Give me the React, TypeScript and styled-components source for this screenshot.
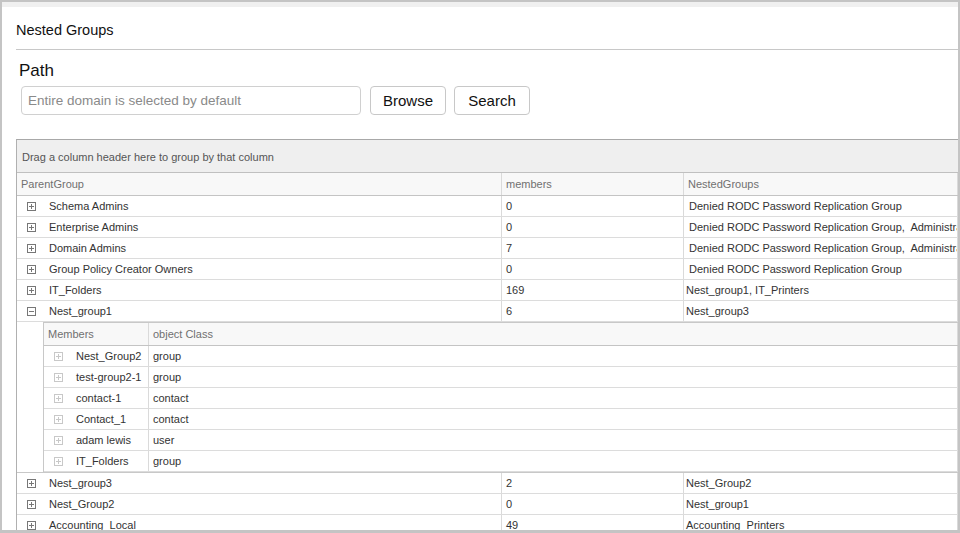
import React from 'react';
import styled, { createGlobalStyle } from 'styled-components';

const GlobalStyle = createGlobalStyle`
  html, body {
    margin: 0;
    padding: 0;
    background: #fff;
    overflow: hidden;
  }
  body {
    font-family: "Liberation Sans", Arial, sans-serif;
    color: #333;
  }
`;

const Frame = styled.div`
  width: 960px;
  height: 533px;
  box-sizing: border-box;
  border: 2px solid #c4c4c4;
  border-bottom-width: 3px;
  display: flex;
  flex-direction: column;
  overflow: hidden;
`;

const TopStrip = styled.div`
  height: 5px;
  background: #f0f0f0;
  flex-shrink: 0;
`;

const Content = styled.div`
  padding-left: 14px;
  flex: 1;
  display: flex;
  flex-direction: column;
  min-height: 0;
`;

const TitleBar = styled.div`
  height: 43px;
  box-sizing: border-box;
  padding-top: 15px;
  border-bottom: 1px solid #c8c8c8;
  font-size: 14.5px;
  color: #111;
  flex-shrink: 0;
`;

const PathSection = styled.div`
  padding-left: 3px;
  padding-top: 11px;
  height: 89px;
  box-sizing: border-box;
  flex-shrink: 0;
`;

const PathLabel = styled.div`
  font-size: 17px;
  color: #111;
  line-height: 20px;
`;

const PathRow = styled.div`
  display: flex;
  align-items: center;
  gap: 8px;
  margin-top: 5px;
  padding-left: 2px;
`;

const PathInput = styled.input`
  width: 340px;
  height: 29px;
  box-sizing: border-box;
  border: 1px solid #d0d0d0;
  border-radius: 4px;
  padding: 0 6px;
  font-family: "Liberation Sans", Arial, sans-serif;
  font-size: 13.5px;
  color: #333;
  margin-right: 1px;
  &::placeholder {
    color: #8a8a8a;
  }
`;

const Button = styled.button`
  width: 76px;
  height: 29px;
  box-sizing: border-box;
  border: 1px solid #c8c8c8;
  border-radius: 4px;
  background: #fff;
  font-family: "Liberation Sans", Arial, sans-serif;
  font-size: 15px;
  color: #111;
  padding: 0;
`;

const Grid = styled.div`
  border-top: 1px solid #a8a8a8;
  border-left: 1px solid #b0b0b0;
  flex: 1;
  min-height: 0;
  overflow: hidden;
  font-size: 11px;
`;

const GroupPanel = styled.div`
  background: #efefef;
  border-bottom: 1px solid #c0c0c0;
  display: flex;
  align-items: center;
  padding-left: 5px;
  padding-top: 2px;
  box-sizing: border-box;
  height: 33px;
  color: #555;
`;

const Row = styled.div<{ $cols: string; $header?: boolean }>`
  display: grid;
  grid-template-columns: ${p => p.$cols};
  height: ${p => (p.$header ? 23 : 21)}px;
  box-sizing: border-box;
  border-bottom: 1px solid ${p => (p.$header ? '#c4c4c4' : '#dcdcdc')};
  background: ${p => (p.$header ? '#f8f8f8' : '#fff')};
  color: ${p => (p.$header ? '#707070' : '#333')};
`;

const Cell = styled.div<{ $pad?: number }>`
  display: flex;
  align-items: center;
  padding-left: ${p => p.$pad ?? 4}px;
  border-right: 1px solid #dadada;
  white-space: pre;
  overflow: hidden;
  min-width: 0;
`;

const ExpandBox = styled.span<{ $faint?: boolean }>`
  display: inline-flex;
  width: 9px;
  height: 9px;
  margin-right: 13px;
  flex-shrink: 0;
  color: ${p => (p.$faint ? '#c8c8c8' : '#777')};
`;

const Detail = styled.div`
  padding-left: 26px;
  border-bottom: 1px solid #c8c8c8;
`;

const SubGrid = styled.div`
  border-top: 1px solid #c8c8c8;
  border-left: 1px solid #c8c8c8;
`;

const Expander = ({ open, faint }: { open?: boolean; faint?: boolean }) => (
  <ExpandBox $faint={faint}>
    <svg width="9" height="9" viewBox="0 0 9 9">
      <rect x="0.5" y="0.5" width="8" height="8" fill="none" stroke="currentColor" />
      <line x1="2" y1="4.5" x2="7" y2="4.5" stroke="currentColor" />
      {!open && <line x1="4.5" y1="2" x2="4.5" y2="7" stroke="currentColor" />}
    </svg>
  </ExpandBox>
);

const mainCols = '485px 182px 1fr';
const subCols = '105px 1fr';

const topGroups = [
  ['Schema Admins', '0', ' Denied RODC Password Replication Group'],
  ['Enterprise Admins', '0', ' Denied RODC Password Replication Group,  Administrators'],
  ['Domain Admins', '7', ' Denied RODC Password Replication Group,  Administrators'],
  ['Group Policy Creator Owners', '0', ' Denied RODC Password Replication Group'],
  ['IT_Folders', '169', 'Nest_group1, IT_Printers'],
];

const members = [
  ['Nest_Group2', 'group'],
  ['test-group2-1', 'group'],
  ['contact-1', 'contact'],
  ['Contact_1', 'contact'],
  ['adam lewis', 'user'],
  ['IT_Folders', 'group'],
];

const bottomGroups = [
  ['Nest_group3', '2', 'Nest_Group2'],
  ['Nest_Group2', '0', 'Nest_group1'],
  ['Accounting_Local', '49', 'Accounting_Printers'],
];

const GroupRow = ({ row, open }: { row: string[]; open?: boolean }) => (
  <Row $cols={mainCols}>
    <Cell $pad={10}>
      <Expander open={open} />
      {row[0]}
    </Cell>
    <Cell>{row[1]}</Cell>
    <Cell $pad={2}>{row[2]}</Cell>
  </Row>
);

export default function App() {
  return (
    <Frame>
      <GlobalStyle />
      <TopStrip />
      <Content>
        <TitleBar>Nested Groups</TitleBar>
        <PathSection>
          <PathLabel>Path</PathLabel>
          <PathRow>
            <PathInput placeholder="Entire domain is selected by default" />
            <Button>Browse</Button>
            <Button>Search</Button>
          </PathRow>
        </PathSection>
        <Grid>
          <GroupPanel>Drag a column header here to group by that column</GroupPanel>
          <Row $cols={mainCols} $header>
            <Cell>ParentGroup</Cell>
            <Cell>members</Cell>
            <Cell>NestedGroups</Cell>
          </Row>
          {topGroups.map(r => (
            <GroupRow key={r[0]} row={r} />
          ))}
          <GroupRow row={['Nest_group1', '6', 'Nest_group3']} open />
          <Detail>
            <SubGrid>
              <Row $cols={subCols} $header>
                <Cell>Members</Cell>
                <Cell>object Class</Cell>
              </Row>
              {members.map((m, i) => (
                <Row $cols={subCols} key={i}>
                  <Cell $pad={10}>
                    <Expander faint />
                    {m[0]}
                  </Cell>
                  <Cell>{m[1]}</Cell>
                </Row>
              ))}
            </SubGrid>
          </Detail>
          {bottomGroups.map(r => (
            <GroupRow key={r[0]} row={r} />
          ))}
        </Grid>
      </Content>
    </Frame>
  );
}
